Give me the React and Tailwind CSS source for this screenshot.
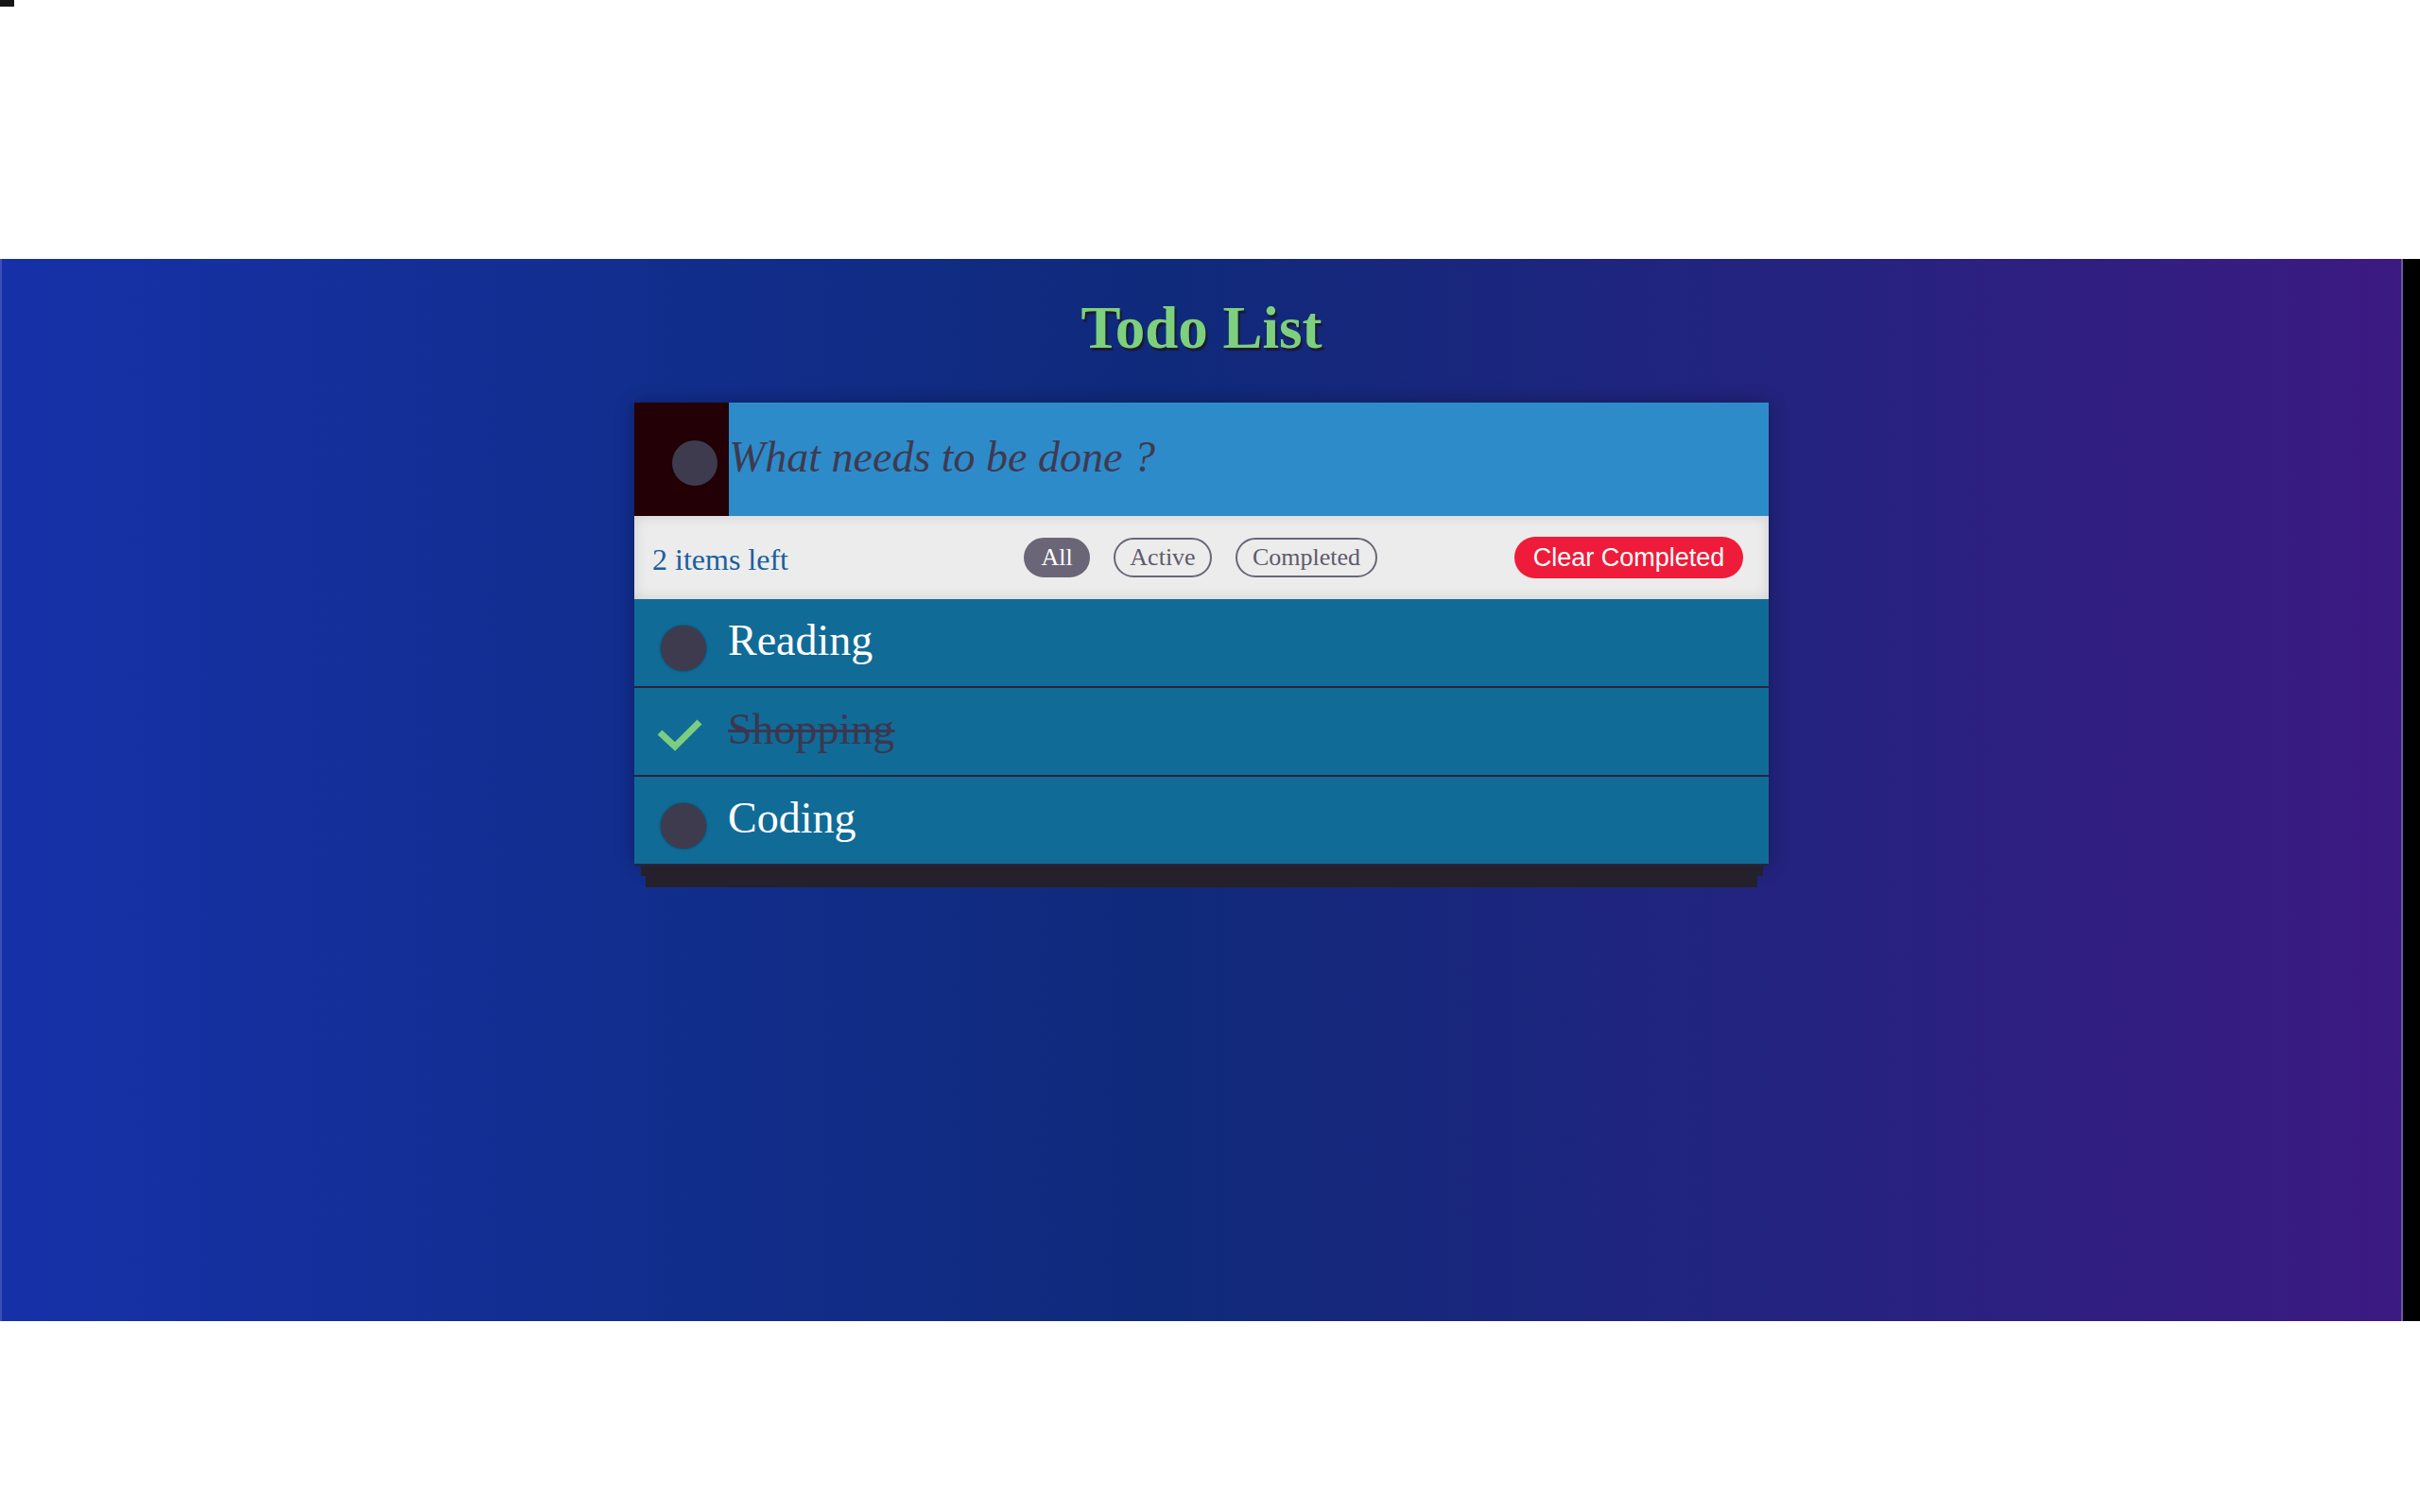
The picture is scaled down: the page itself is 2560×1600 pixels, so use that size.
import React from "react";

const serif = "font-['Liberation_Serif','Times_New_Roman',serif]";

function Dot() {
  return (
    <div className="w-[48px] h-[48px] rounded-full bg-[#3f3b4e] shadow-[0_0_3px_rgba(0,0,0,0.45)]" />
  );
}

function Row({ text, done }) {
  return (
    <div className="flex h-[94px] border-b-2 border-[#28243a] bg-[#116b97]">
      <div className="w-[99px] shrink-0">
        {done ? (
          <svg className="ml-[24px] mt-[28px]" width="52" height="40" viewBox="0 0 52 40">
            <polyline points="3,19 19,34 45,8" fill="none" stroke="#7dcd80" strokeWidth="7" />
          </svg>
        ) : (
          <div className="ml-[28px] mt-[28px]">
            <Dot />
          </div>
        )}
      </div>
      <div
        className={`pt-[18px] text-[46px] leading-[52px] ${serif} ${
          done ? "text-[#3b3750] line-through decoration-[#3b3750] decoration-[3px]" : "text-white"
        }`}
      >
        {text}
      </div>
    </div>
  );
}

export default function App() {
  return (
    <div className="w-full bg-white">
      <div className="h-[7px] w-[15px] bg-[#151515]" />
      <div className="h-[267px]" />
      <div className="flex h-[1124px]">
        <div className="flex-1 border-l-2 border-r-2 border-l-[#3b4fbb] border-r-[#6b5a9e] bg-[linear-gradient(to_right,#1631a8_0%,#122e8f_25%,#0f2a7b_48%,#24237f_75%,#3c1a82_100%)]">
          <h1
            className={`pt-[36px] text-center text-[63px] leading-[74px] font-bold text-[#7dd07d] ${serif} [text-shadow:2px_3px_1px_#1d1a30]`}
          >
            Todo List
          </h1>
          <div className="mx-auto mt-[42px] w-[1200px] shadow-[0_0_18px_rgba(0,0,0,0.3)]">
            <div className="flex h-[120px]">
              <div className="w-[100px] shrink-0 bg-[#230005] pl-[40px] pt-[40px]">
                <Dot />
              </div>
              <div className="flex-1 bg-[#2e8bc9]">
                <div className={`mt-[32px] text-[46px] leading-[52px] italic text-[#3e3a50] ${serif}`}>
                  What needs to be done ?
                </div>
              </div>
            </div>
            <div className="flex h-[88px] items-center bg-[#ececec] shadow-[inset_0_0_14px_rgba(0,0,0,0.13)]">
              <div className={`w-[412px] shrink-0 pl-[19px] mt-[4px] text-[32px] leading-[36px] text-[#1b5e9f] ${serif}`}>
                2 items left
              </div>
              <div className={`flex gap-[25px] text-[26px] leading-[30px] ${serif}`}>
                <button className="flex h-[42px] w-[70px] items-center justify-center rounded-full border-2 border-[#6b6677] bg-[#6b6677] text-white">
                  All
                </button>
                <button className="flex h-[42px] w-[104px] items-center justify-center rounded-full border-2 border-[#6b6677] text-[#5f5a6b]">
                  Active
                </button>
                <button className="flex h-[42px] w-[150px] items-center justify-center rounded-full border-2 border-[#6b6677] text-[#5f5a6b]">
                  Completed
                </button>
              </div>
              <button className="ml-auto mr-[27px] flex h-[44px] w-[242px] items-center justify-center rounded-full bg-[#ee1c3a] font-['Liberation_Sans',Arial,sans-serif] text-[27px] leading-[30px] text-white">
                Clear Completed
              </button>
            </div>
            <Row text="Reading" />
            <Row text="Shopping" done />
            <Row text="Coding" />
          </div>
          <div className="mx-auto h-[11px] w-[1187px] bg-[#24212c]" />
          <div className="mx-auto h-[12px] w-[1176px] bg-[#24212c]" />
        </div>
        <div className="w-[18px] bg-black" />
      </div>
    </div>
  );
}
